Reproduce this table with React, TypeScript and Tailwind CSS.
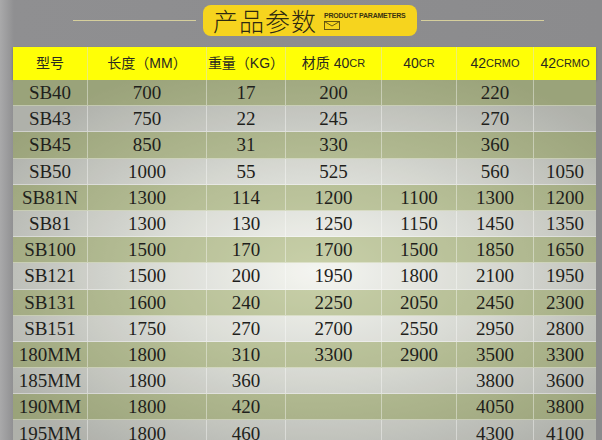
const rows: string[][] = [
  ["SB40", "700", "17", "200", "", "220", ""],
  ["SB43", "750", "22", "245", "", "270", ""],
  ["SB45", "850", "31", "330", "", "360", ""],
  ["SB50", "1000", "55", "525", "", "560", "1050"],
  ["SB81N", "1300", "114", "1200", "1100", "1300", "1200"],
  ["SB81", "1300", "130", "1250", "1150", "1450", "1350"],
  ["SB100", "1500", "170", "1700", "1500", "1850", "1650"],
  ["SB121", "1500", "200", "1950", "1800", "2100", "1950"],
  ["SB131", "1600", "240", "2250", "2050", "2450", "2300"],
  ["SB151", "1750", "270", "2700", "2550", "2950", "2800"],
  ["180MM", "1800", "310", "3300", "2900", "3500", "3300"],
  ["185MM", "1800", "360", "", "", "3800", "3600"],
  ["190MM", "1800", "420", "", "", "4050", "3800"],
  ["195MM", "1800", "460", "", "", "4300", "4100"],
];

function Small({ children }: { children: string }) {
  return <span className="text-[11px]">{children}</span>;
}

const headers = [
  <>型号</>,
  <>长度（MM）</>,
  <>重量（KG）</>,
  <>
    材质 40<Small>CR</Small>
  </>,
  <>
    40<Small>CR</Small>
  </>,
  <>
    42<Small>CRMO</Small>
  </>,
  <>
    42<Small>CRMO</Small>
  </>,
];

const cols = "grid grid-cols-[75px_119px_79px_96px_75px_77px_62px]";

export default function App() {
  return (
    <div className="w-[602px] h-[440px] overflow-hidden bg-[linear-gradient(90deg,#a9a9aa_0px,#8f8f91_14px,#8b8b8d_100%)]">
      {/* title */}
      <div className="flex items-center h-[47px] pb-[9px] pt-[3px]">
        <div className="ml-[73px] w-[123px] h-px bg-[#d6cf9c]" />
        <div className="ml-[7px] w-[214px] h-[31px] rounded-[8px] bg-[#f6d41e] flex items-center pl-[10px]">
          <span className="text-[25px] leading-none font-light text-[#2e2a10] tracking-[1px] [font-family:'Noto_Sans_CJK_SC',sans-serif]">
            产品参数
          </span>
          <div className="ml-[7px] flex flex-col items-start">
            <span className="text-[7px] leading-none font-bold text-[#3a3210] tracking-[-0.2px] [font-family:'Liberation_Sans',sans-serif]">
              PRODUCT PARAMETERS
            </span>
            <svg width="16" height="9" viewBox="0 0 16 9" className="mt-[2px]">
              <rect x="0.5" y="0.5" width="15" height="8" fill="none" stroke="#5a4c10" strokeWidth="0.9" />
              <path d="M0.5 0.5 L8 5 L15.5 0.5" fill="none" stroke="#5a4c10" strokeWidth="0.9" />
            </svg>
          </div>
        </div>
        <div className="ml-[4px] w-[123px] h-px bg-[#d6cf9c]" />
      </div>

      {/* table */}
      <div className="ml-[13px] w-[583px]">
        <div className={`${cols} h-[33px] bg-[#ffff06] shadow-[0_1px_2px_rgba(0,0,0,0.25)]`}>
          {headers.map((h, i) => (
            <div
              key={i}
              className="flex items-center justify-center text-[14px] text-[#2a2a20] border-r border-[#eeee70] last:border-r-0 [font-family:'Liberation_Sans','Noto_Sans_CJK_SC',sans-serif]"
            >
              {h}
            </div>
          ))}
        </div>
        <div className="bg-[radial-gradient(ellipse_65%_60%_at_52%_52%,#f3f4ef_0%,#d4d6cf_45%,#a6a8a1_100%)]">
          {rows.map((r, ri) => (
            <div
              key={ri}
              className={`${cols} h-[26.2px] border-b border-white/40 ${
                ri % 2 === 0 ? "bg-[#8a9a40]/40" : "bg-white/10"
              }`}
            >
              {r.map((c, ci) => (
                <div
                  key={ci}
                  className="flex items-center justify-center text-[19px] leading-none text-[#1f1f1c] border-r border-white/40 last:border-r-0 [font-family:'Liberation_Serif',serif]"
                >
                  {c}
                </div>
              ))}
            </div>
          ))}
        </div>
      </div>
    </div>
  );
}
